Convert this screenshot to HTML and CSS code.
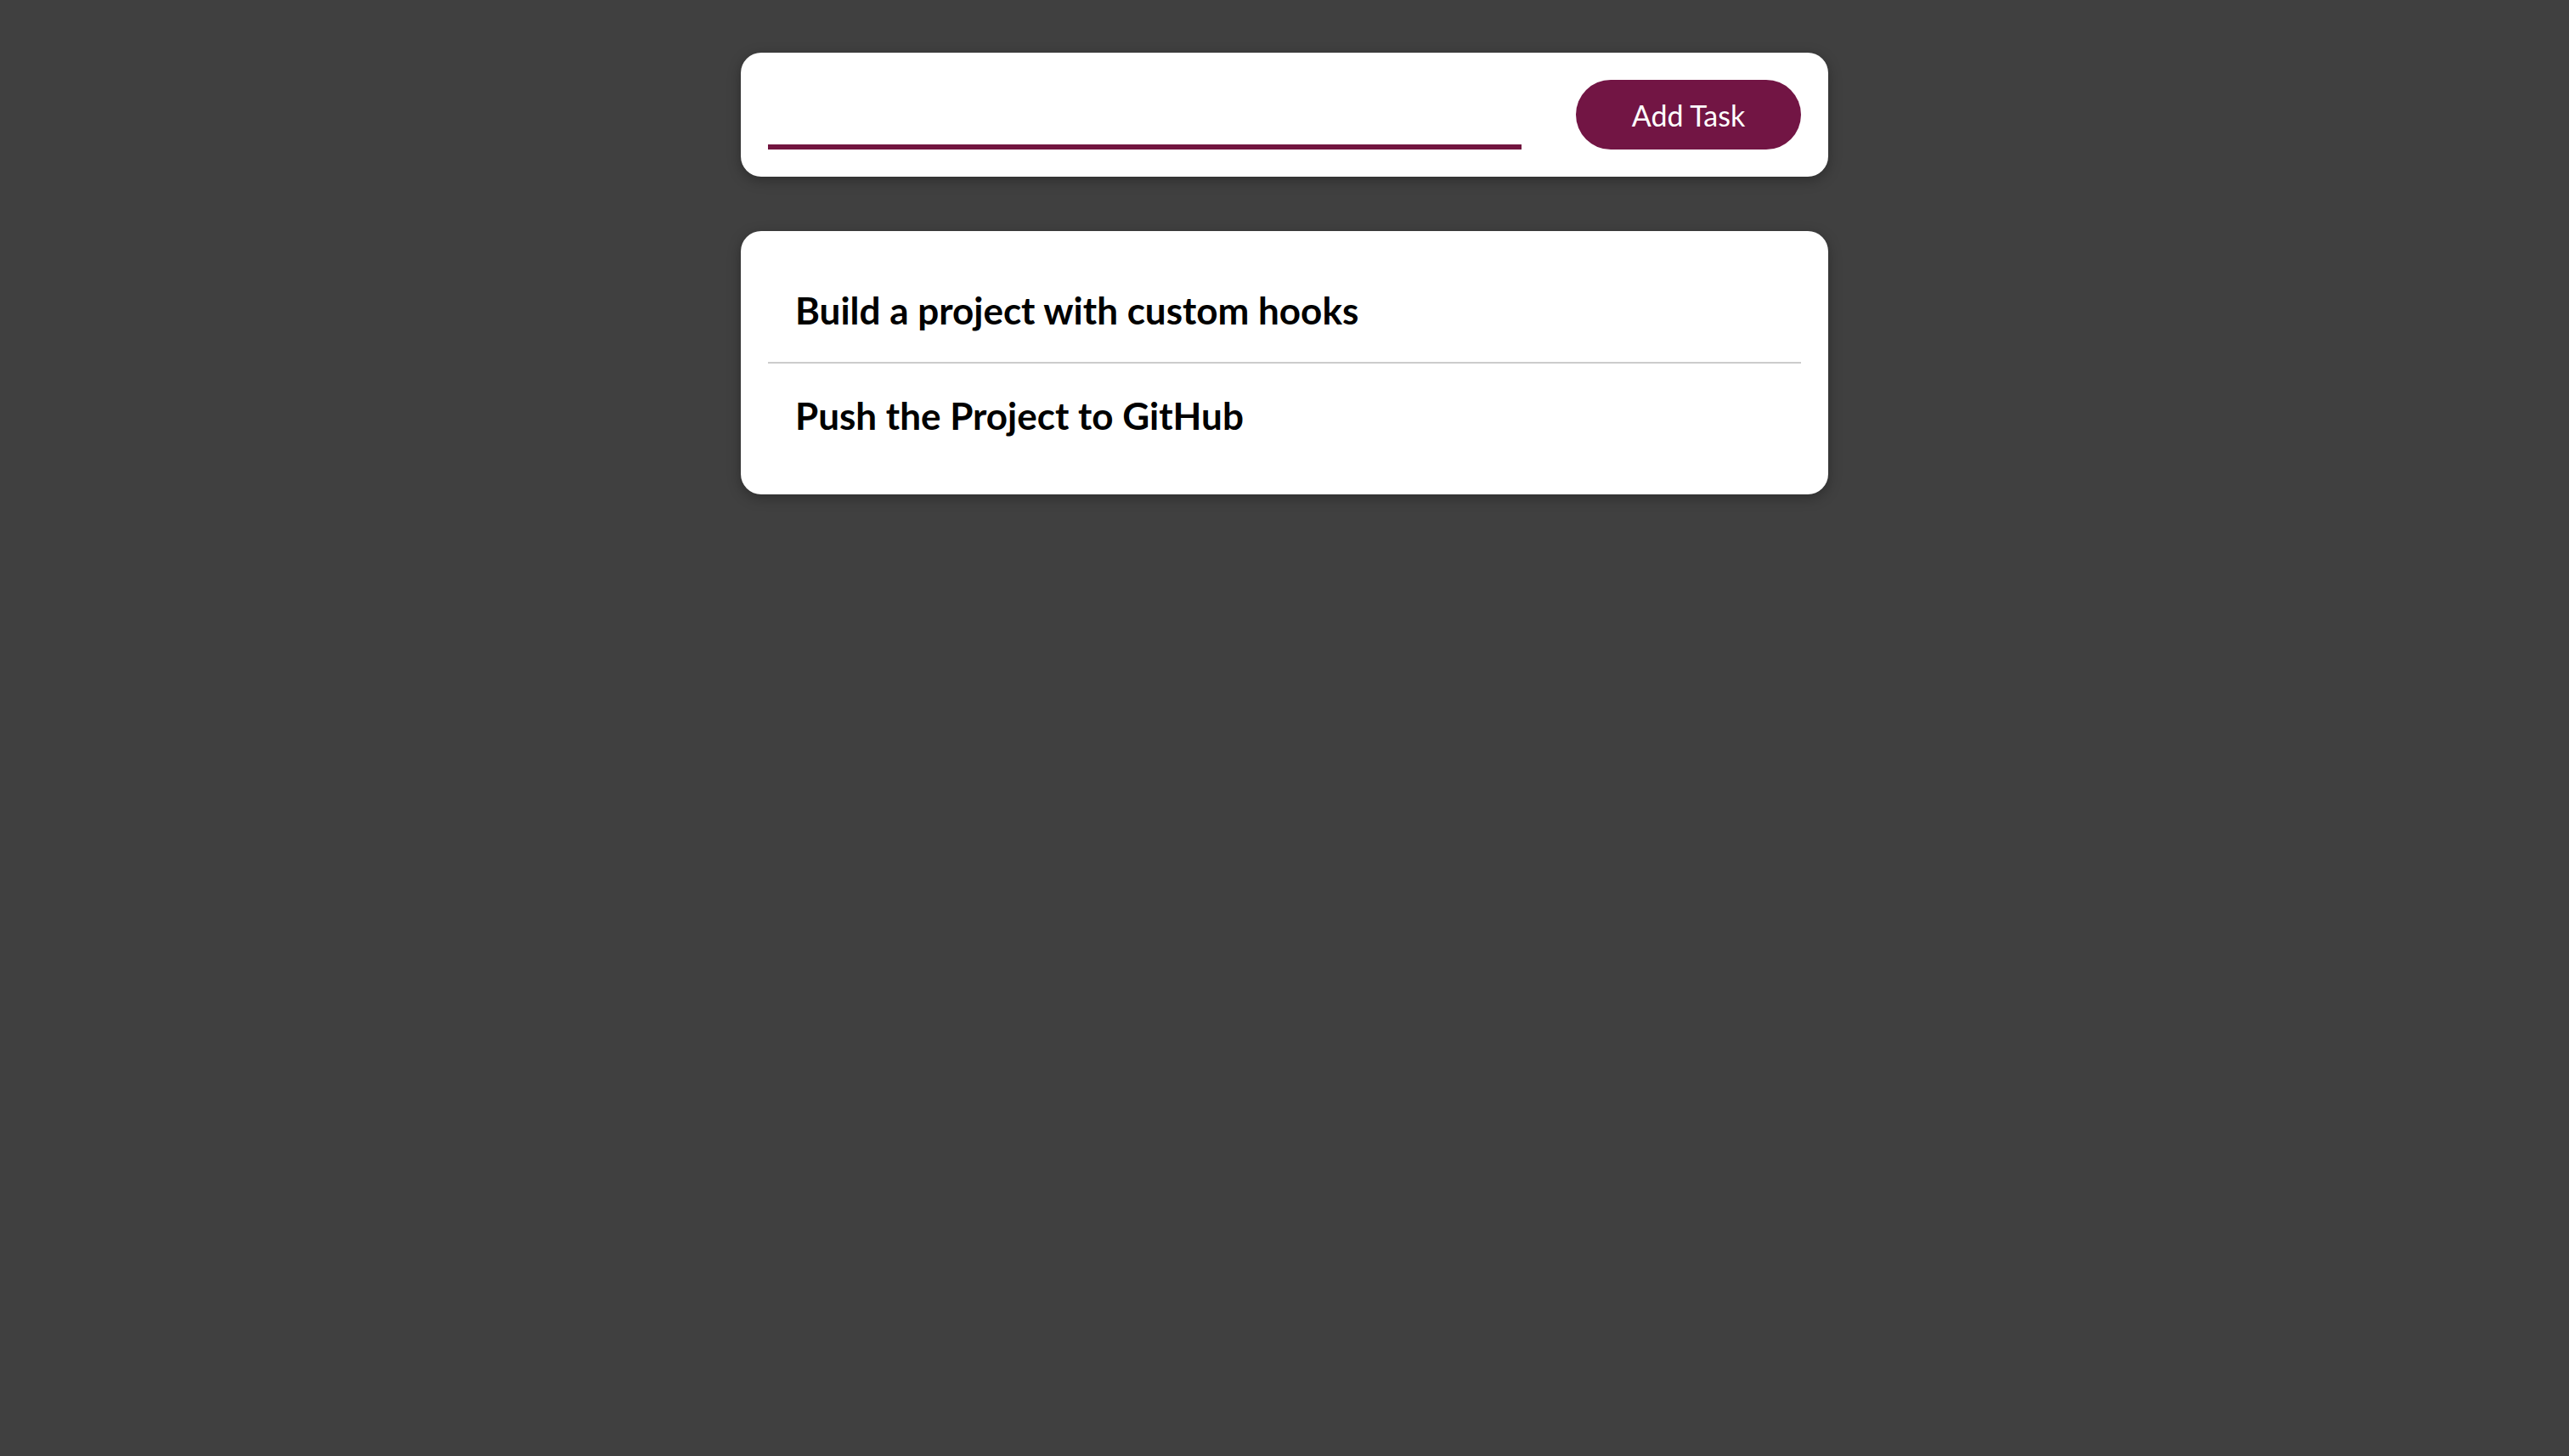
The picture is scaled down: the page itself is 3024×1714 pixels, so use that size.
FILE: index.html
```html
<!DOCTYPE html>
<html lang="en">
<head>
<meta charset="utf-8">
<title>Tasks</title>
<link rel="stylesheet" href="styles.css">
</head>
<body>
<main class="app">
  <section class="card form-card">
    <form class="task-form">
      <input class="task-input" type="text" aria-label="Task">
      <button class="add-btn" type="button">Add Task</button>
    </form>
  </section>
  <section class="card list-card">
    <ul class="task-list">
      <li class="task">Build a project with custom hooks</li>
      <li class="task">Push the Project to GitHub</li>
    </ul>
  </section>
</main>
</body>
</html>
```
FILE: styles.css
```css
html, body {
  margin: 0;
  padding: 0;
  background: #404040;
  height: 100%;
}
body {
  font-family: Lato, "Open Sans", sans-serif;
}
.app {
  width: 1280px;
  margin: 0 auto;
  padding-top: 62px;
  display: flex;
  flex-direction: column;
  gap: 64px;
}
.card {
  background: #ffffff;
  border-radius: 24px;
  box-shadow: 0 4px 16px rgba(0, 0, 0, 0.3);
  padding: 32px;
}
.task-form {
  display: flex;
  align-items: flex-end;
  gap: 64px;
  margin: 0;
}
.task-input {
  flex: 1;
  height: 50px;
  border: none;
  border-bottom: 6px solid #72153f;
  outline: none;
  padding: 0;
  font: inherit;
  font-size: 32px;
  background: transparent;
}
.add-btn {
  width: 265px;
  height: 82px;
  border: none;
  border-radius: 41px;
  background: #721544;
  color: #ffffff;
  font-family: Lato, sans-serif;
  font-size: 34px;
  font-weight: 400;
  cursor: pointer;
}
.task-list {
  list-style: none;
  margin: 0;
  padding: 0;
}
.task {
  height: 122px;
  display: flex;
  align-items: center;
  padding: 0 32px;
  font-size: 44px;
  font-weight: 700;
  color: #000000;
  letter-spacing: 0;
}
.task + .task {
  border-top: 2px solid #cccccc;
}
```
